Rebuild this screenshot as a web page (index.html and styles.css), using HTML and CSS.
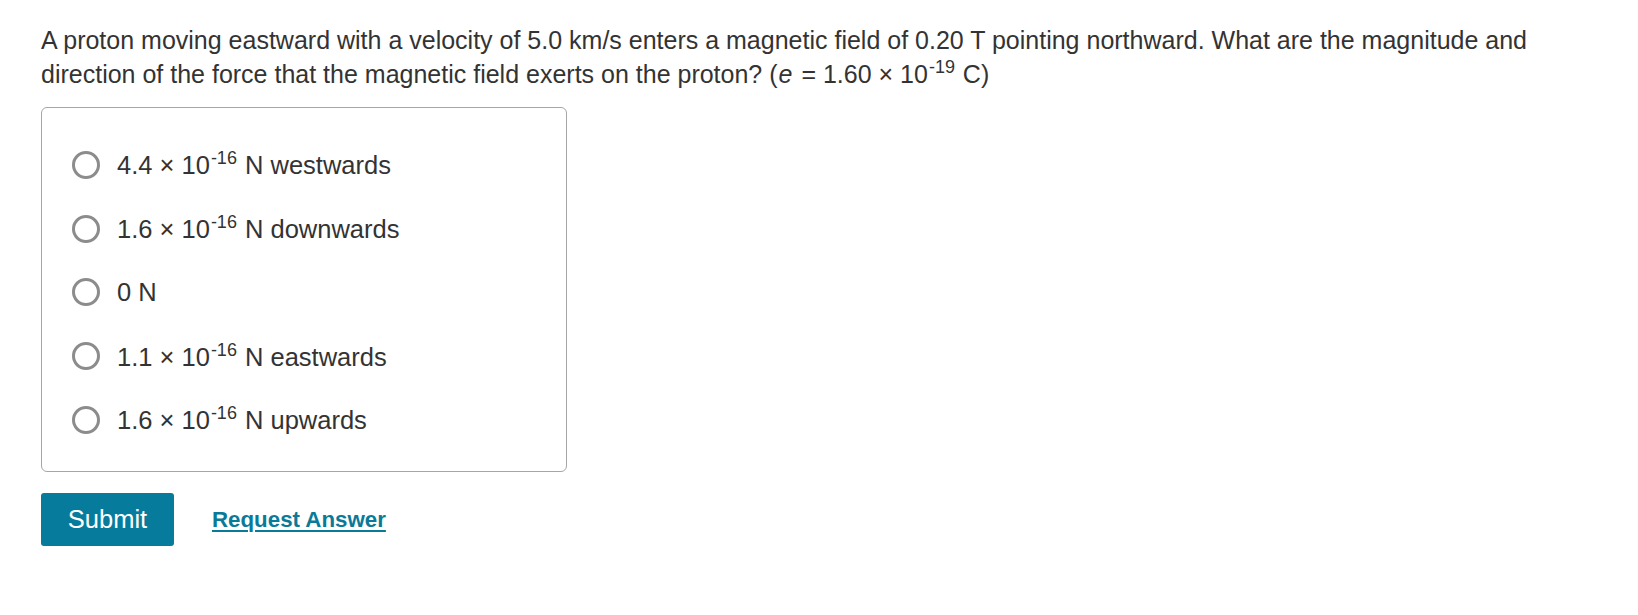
FILE: index.html
```html
<!DOCTYPE html>
<html>
<head>
<meta charset="utf-8">
<link rel="stylesheet" href="styles.css">
</head>
<body>
<div class="page">
  <p class="question">A proton moving eastward with a velocity of 5.0 km/s enters a magnetic field of 0.20 T pointing northward. What are the magnitude and direction of the force that the magnetic field exerts on the proton? (<span class="var">e</span> = 1.60 × 10<sup>-19</sup> C)</p>
  <div class="choices">
    <label class="choice"><span class="radio"></span><span class="text">4.4 × 10<sup>-16</sup> N westwards</span></label>
    <label class="choice"><span class="radio"></span><span class="text">1.6 × 10<sup>-16</sup> N downwards</span></label>
    <label class="choice"><span class="radio"></span><span class="text">0 N</span></label>
    <label class="choice"><span class="radio"></span><span class="text">1.1 × 10<sup>-16</sup> N eastwards</span></label>
    <label class="choice"><span class="radio"></span><span class="text">1.6 × 10<sup>-16</sup> N upwards</span></label>
  </div>
  <div class="actions">
    <button class="submit">Submit</button>
    <a class="request" href="#">Request Answer</a>
  </div>
</div>
</body>
</html>
```

FILE: styles.css
```css
html, body {
  margin: 0;
  padding: 0;
  background: #fff;
}
body {
  font-family: "Liberation Sans", Arial, Helvetica, sans-serif;
  color: #333;
  font-size: 25.5px;
}
.page {
  padding: 23px 41px 0 41px;
}
.question {
  margin: 0;
  font-size: 25px;
  line-height: 34px;
  width: 1525px;
}
.var {
  font-style: italic;
  margin-left: 1px;
  margin-right: 2px;
}
sup {
  font-size: 18px;
  line-height: 1;
  vertical-align: 10px;
  margin-left: 1px;
  margin-right: 1px;
}
.choices {
  margin-top: 16px;
  width: 526px;
  height: 365px;
  border: 1px solid #a6a6a6;
  border-radius: 6px;
  box-sizing: border-box;
  display: flex;
  flex-direction: column;
  padding: 25px 0 0 30px;
}
.choice {
  display: flex;
  align-items: center;
  height: 63.75px;
  flex: none;
}
.radio {
  width: 28px;
  height: 28px;
  border: 3px solid #8c8c8c;
  border-radius: 50%;
  box-sizing: border-box;
  flex: none;
}
.text {
  margin-left: 17px;
  line-height: 30px;
}
.actions {
  margin-top: 21px;
  display: flex;
  align-items: center;
}
.submit {
  width: 133px;
  height: 53px;
  background: #077b9c;
  color: #fff;
  border: none;
  border-radius: 3px;
  font-family: inherit;
  font-size: 25.5px;
  padding: 0;
}
.request {
  margin-left: 38px;
  color: #0a7a99;
  font-weight: bold;
  font-size: 22.3px;
  text-decoration: underline;
  text-decoration-thickness: 2px;
  text-underline-offset: 3px;
}
```
